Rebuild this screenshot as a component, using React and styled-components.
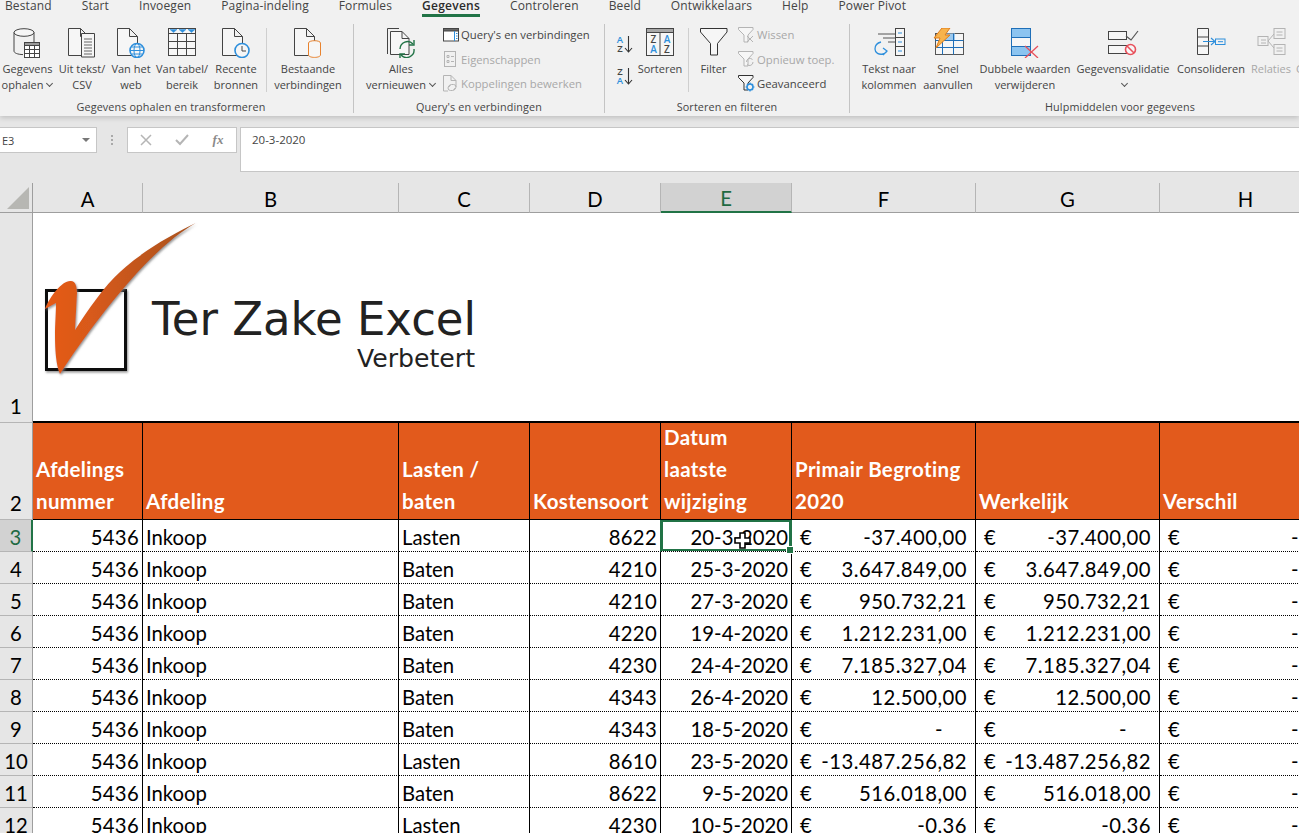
import React from 'react';
import styled, { createGlobalStyle } from 'styled-components';

const Global = createGlobalStyle`
  html, body { margin: 0; padding: 0; background: #e6e6e6; overflow: hidden; }
  #root { width: 1299px; height: 833px; overflow: hidden; }
`;
const Page = styled.div`
  width: 1299px; height: 833px; overflow: hidden; background: #e6e6e6;
  display: flex; flex-direction: column;
  font-family: "Open Sans", "Noto Sans", sans-serif;
`;
const Ribbon = styled.div`
  height: 116px; flex: none; background: #f1f1f1; overflow: hidden;
  box-shadow: 0 2px 5px rgba(0,0,0,.16); position: relative; z-index: 1;
`;
const TabBar = styled.div`
  height: 17px; display: flex; align-items: flex-start; gap: 30px; padding-left: 5px; overflow: hidden;
`;
const Tab = styled.div`
  height: 17px; margin-top: -3px; font-size: 12px; line-height: 17px; color: #444; white-space: nowrap;
  letter-spacing: .12px; position: relative; box-sizing: content-box;
  font-weight: ${p => (p.$active ? 600 : 400)};
  border-bottom: ${p => (p.$active ? '3px solid #217346' : '0')};
  ${p => p.$active && 'color:#2b2b2b; height:17px; letter-spacing: .25px;'}
`;
const Groups = styled.div`
  display: flex; height: 92px; padding-top: 7px;
`;
const Group = styled.section`
  width: ${p => p.$w}px; flex: none; height: 89px; display: flex; flex-direction: column;
  border-right: ${p => (p.$last ? '0' : '1px solid #c4c4c4')}; box-sizing: border-box;
`;
const GroupBody = styled.div`
  flex: 1; display: flex; padding-left: ${p => p.$pad || 0}px; min-height: 0;
`;
const Caption = styled.div`
  height: 16px; width: ${p => (p.$w ? `${p.$w}px` : 'auto')}; line-height: 20px; font-size: 10.8px; text-align: center; color: #444; white-space: nowrap;
  letter-spacing: .12px;
`;
const BigButton = styled.div`
  width: ${p => p.$w}px; flex: none; display: flex; flex-direction: column; align-items: center; padding-top: 4px;
  margin-left: ${p => p.$ml || 0}px;
`;
const IconSlot = styled.div`
  height: 33px; display: flex; justify-content: center; align-items: flex-start;
`;
const BigLabel = styled.div`
  font-size: 11px; line-height: 16px; text-align: center; color: ${p => (p.$off ? '#a8a8a8' : '#444')}; white-space: nowrap;
`;
const ClippedLabel = styled.div`
  flex: none; margin: 37px 0 0 3px; font-size: 11px; line-height: 16px; color: #a8a8a8; white-space: nowrap;
`;
const VSep = styled.div`
  width: 1px; height: 64px; margin: 4px ${p => p.$r || 0}px 0 ${p => p.$l || 0}px; background: #cfcfcf; flex: none;
`;
const SmallColumn = styled.div`
  width: ${p => p.$w}px; flex: none; display: flex; flex-direction: column; margin: -1.5px 0 0 ${p => p.$ml || 0}px;
`;
const SmallButton = styled.div`
  height: 24.5px; display: flex; align-items: center; gap: 2px; font-size: 11.3px; white-space: nowrap;
  color: ${p => (p.$off ? '#a8a8a8' : '#444')};
`;
const SmallIcon = styled.span`
  width: 17px; height: 20px; display: flex; align-items: center; justify-content: center; flex: none;
`;
const SortColumn = styled.div`
  width: 20px; flex: none; margin-left: ${p => p.$ml}px; display: flex; flex-direction: column; gap: 14px; padding-top: 11px;
`;
const Chevron = styled.span`
  display: inline-block; width: 4px; height: 4px; margin: 0 1px 3px 4px; border-right: 1px solid #555; border-bottom: 1px solid #555; transform: rotate(45deg);
`;
const FormulaBar = styled.div`
  height: 56px; flex: none; display: flex; align-items: flex-start; padding-top: 11px; box-sizing: content-box;
`;
const NameBox = styled.div`
  height: 24px; background: #fff; border: 1px solid #c6c6c6; border-left: 0; box-sizing: content-box;
  display: flex; align-items: center; justify-content: space-between; font-size: 11px; color: #444; padding-left: 2px;
  width: 94px;
`;
const DropTri = styled.span`
  width: 0; height: 0; border-left: 4px solid transparent; border-right: 4px solid transparent; border-top: 4px solid #777; margin-right: 6px;
`;
const Grip = styled.div`
  width: 30px; height: 26px; flex: none; display: flex; flex-direction: column; align-items: center; justify-content: center; gap: 2px;
  & > i { width: 2px; height: 2px; background: #a9a9a9; display: block; }
`;
const FxBox = styled.div`
  width: 108px; height: 24px; flex: none; background: #fff; border: 1px solid #c6c6c6; display: flex; align-items: center; color: #b0b0b0;
`;
const FxSlot = styled.span`
  width: 36px; display: flex; justify-content: center; align-items: center; font-family: "Liberation Serif", serif; font-style: italic; font-size: 13px; color: #8a8a8a; font-weight: 700;
`;
const FormulaInput = styled.div`
  flex: 1; height: 45px; margin-left: 3px; background: #fff; border: 1px solid #c6c6c6; border-right: 0; box-sizing: border-box;
  padding: 4px 0 0 11px; font-size: 11.5px; line-height: 16px; color: #444;
`;
const Sheet = styled.div`
  display: grid; position: relative; flex: none;
  grid-template-columns: 33px 110px 256px 131px 131px 131px 184px 184px 172px;
  grid-template-rows: 30px 210px 97px repeat(10, 32px);
  font-family: Lato, "Liberation Sans", sans-serif; font-size: 20.3px; color: #000; background: #fff;
`;
const Corner = styled.div`
  background: #e6e6e6; border-right: 1px solid #9e9e9e; border-bottom: 1px solid #9e9e9e; box-sizing: border-box; display: flex; align-items: flex-end; justify-content: flex-end; padding: 0 3px 3px 0;
`;
const Tri = styled.span`
  width: 0; height: 0; border-left: 22px solid transparent; border-bottom: 22px solid #b7b7b3;
`;
const ColHead = styled.div`
  background: ${p => (p.$on ? '#d2d2d2' : '#e6e6e6')}; box-sizing: border-box;
  border-right: 1px solid #b5b5b5;
  border-bottom: ${p => (p.$on ? '2px solid #217346' : '1px solid #9e9e9e')};
  color: ${p => (p.$on ? '#1f6a42' : '#000')};
  display: flex; align-items: flex-end; justify-content: center; line-height: 26px;
`;
const RowHead = styled.div`
  background: ${p => (p.$on ? '#d2d2d2' : '#e6e6e6')}; box-sizing: border-box;
  border-right: ${p => (p.$on ? '2px solid #217346' : '1px solid #9e9e9e')};
  border-bottom: 1px solid #b5b5b5;
  color: ${p => (p.$on ? '#1f6a42' : '#000')};
  display: flex; align-items: flex-end; justify-content: center; line-height: ${p => (p.$tall ? 32 : 28)}px;
`;
const LogoCell = styled.div`
  grid-column: 2 / -1; background: #fff; border-bottom: 2px solid #000; box-sizing: border-box; overflow: hidden; line-height: 0;
`;
const HeadCell = styled.div`
  background: #e25a1c; color: #fff; font-weight: 700; box-sizing: border-box; border-right: 1.5px solid #000; border-bottom: 1.5px solid #000;
  display: flex; align-items: flex-end; padding: 0 3px 2px 3px; line-height: 32px; white-space: pre-line;
  font-size: 20.5px; letter-spacing: .35px;
`;
const Cell = styled.div`
  box-sizing: border-box; background: #fff; border-right: 1.5px solid #000; border-bottom: 1px dotted #000;
  display: flex; align-items: center; white-space: nowrap; overflow: hidden; line-height: 26px;
  justify-content: ${p => (p.$right ? 'flex-end' : 'flex-start')};
  letter-spacing: ${p => (p.$right ? '.3px' : '0')};
  padding: 3px 3px 0 3px;
`;
const MoneyCell = styled(Cell)`
  justify-content: space-between; padding: 3px ${p => (p.$dash ? 32 : 8)}px 0 8px; letter-spacing: .45px;
`;
const DateCell = styled(Cell)`
  position: relative; overflow: visible; justify-content: flex-end;
  ${p => p.$on && 'box-shadow: inset 0 0 0 2px #217346, -1px 0 0 #217346; border-right-color: #217346; z-index: 2;'}
`;
const Handle = styled.span`
  position: absolute; right: -3px; bottom: -3px; width: 6px; height: 6px; background: #217346; border: 1px solid #fff; box-sizing: content-box;
`;
const Cursor = styled.svg`
  position: absolute; left: 73px; top: 12px; width: 17px; height: 17px;
`;

const D = '#444';
const B = '#2e8fdc';
const G = '#b4b4b4';
const Svg = ({ w, h, children }) => (
  <svg width={w} height={h} viewBox={`0 0 ${w} ${h}`} fill="none" stroke={D} strokeWidth="1" style={{ display: 'block', flex: 'none' }}>{children}</svg>
);
const DocPath = ({ x = 0.5, y = 0.5, c = D }) => (
  <path d={`M${x} ${y}H${x + 12}L${x + 20} ${y + 8}V${y + 27}H${x}Z M${x + 12} ${y}V${y + 8}H${x + 20}`} stroke={c} fill="#f6f6f6" />
);
const MiniTable = ({ x, y, w = 15, h = 15, c = D }) => (
  <g stroke={c}>
    <rect x={x + .5} y={y + .5} width={w} height={h} fill="#fff" />
    <rect x={x + .5} y={y + .5} width={w} height="3" fill="#9a9a9a" />
    <path d={`M${x + w / 3 + .5} ${y + 3}V${y + h}M${x + 2 * w / 3 + .5} ${y + 3}V${y + h}M${x} ${y + 7.5}H${x + w}M${x} ${y + 11.5}H${x + w}`} />
  </g>
);

const IcoData = () => (
  <Svg w={29} h={30}>
    <ellipse cx="11" cy="4.5" rx="10" ry="3.8" fill="#f6f6f6" />
    <path d="M1 4.5V23c0 2 3.5 3.4 9 3.6M21 4.5V14" />
    <MiniTable x={11} y={14} />
  </Svg>
);
const IcoText = () => (
  <Svg w={28} h={30}>
    <DocPath />
    <path d="M13.5 5.5H26.5V29H13.5Z" fill="#f6f6f6" />
    <path d="M16 11h8M16 14h8M16 17h8M16 20h8M16 23h8M16 26h8" stroke="#666" />
  </Svg>
);
const IcoWeb = () => (
  <Svg w={28} h={30}>
    <DocPath />
    <circle cx="20" cy="22.5" r="7" stroke={B} strokeWidth="1.6" fill="#f6f6f6" />
    <ellipse cx="20" cy="22.5" rx="3" ry="7" stroke={B} />
    <path d="M13 22.5h14M14.5 19h11M14.5 26h11" stroke={B} />
  </Svg>
);
const IcoRange = () => (
  <Svg w={29} h={29}>
    <rect x=".5" y=".5" width="27" height="27" fill="#f6f6f6" />
    <path d="M.5 5.5h27M.5 13.5h27M.5 20.5h27M9.5 5.5v22M18.5 5.5v22" />
    <path d="M2 1.5h7l-3.5 3zM11 1.5h7l-3.5 3zM20 1.5h7l-3.5 3z" fill={B} stroke={B} strokeWidth=".5" />
  </Svg>
);
const IcoRecent = () => (
  <Svg w={28} h={30}>
    <DocPath />
    <circle cx="20" cy="22.5" r="7" stroke={B} strokeWidth="1.6" fill="#f6f6f6" />
    <path d="M20 18v5h4" />
  </Svg>
);
const IcoExisting = () => (
  <Svg w={28} h={30}>
    <DocPath />
    <ellipse cx="20.5" cy="15" rx="6" ry="2.3" stroke="#e8832f" fill="#f6f6f6" />
    <path d="M14.5 15v12c0 1.3 2.5 2.4 6 2.4s6-1.1 6-2.4V15" stroke="#e8832f" fill="#f6f6f6" />
  </Svg>
);
const IcoRefresh = () => (
  <Svg w={29} h={30}>
    <path d="M.5 26V.5H12" />
    <path d="M3.5 3.5H15L22 10.5V26.5H3.5Z" fill="#f6f6f6" />
    <path d="M15 3.5V10.5H22" />
    <path d="M13 21a7.5 7.5 0 0 1 13-5M27 21a7.5 7.5 0 0 1-13 6" stroke="#217346" strokeWidth="1.4" />
    <path d="M27 12v5h-5M13 31v-5h5" stroke="#217346" strokeWidth="1.4" />
  </Svg>
);
const IcoQueries = () => (
  <Svg w={16} h={14}>
    <rect x=".5" y=".5" width="15" height="12.5" fill="#fff" />
    <rect x=".5" y=".5" width="15" height="2.5" fill="#666" />
    <path d="M11.5 3v10" stroke={B} />
    <path d="M13 5.5h1.5M13 8h1.5M13 10.5h1.5" stroke={B} />
  </Svg>
);
const IcoProps = () => (
  <Svg w={14} h={16}>
    <rect x=".5" y=".5" width="11" height="15" stroke={G} />
    <path d="M3 4.5h2v2H3zM3 9.5h2v2H3zM7 5.5h3M7 10.5h3" stroke={G} />
  </Svg>
);
const IcoLinks = () => (
  <Svg w={15} h={17}>
    <path d="M.5.5H8L13 5.5V12M.5.5V16H5M8 .5V5.5H13" stroke={G} />
    <path d="M6 12a2.5 2.5 0 0 1 2.5-2.5h2a2.5 2.5 0 0 1 0 5M12 13a2.5 2.5 0 0 1-2.5 2.5h-2a2.5 2.5 0 0 1 0-5" stroke={G} />
  </Svg>
);
const Letter = ({ x, y, c, s = 9.5, children }) => (
  <text x={x} y={y} fill={c} stroke="none" fontSize={s} fontWeight="600" fontFamily="Open Sans, sans-serif" textAnchor="middle">{children}</text>
);
const IcoSort = ({ top, bottom, tc, bc }) => (
  <Svg w={18} h={18}>
    <Letter x={5} y={8} c={tc}>{top}</Letter>
    <Letter x={5} y={17} c={bc}>{bottom}</Letter>
    <path d="M13.5 1v16M10 13l3.5 4 3.5-4" stroke="#333" strokeWidth="1.1" />
  </Svg>
);
const IcoSortBig = () => (
  <Svg w={29} h={28}>
    <rect x=".5" y=".5" width="27" height="27" fill="#f6f6f6" />
    <rect x=".5" y=".5" width="27" height="4" fill="#a8a8a8" />
    <path d="M14 4.5v23" />
    <Letter x={7.5} y={14.5} c={D} s={10}>Z</Letter>
    <Letter x={7.5} y={25} c={B} s={10}>A</Letter>
    <Letter x={21} y={14.5} c={B} s={10}>A</Letter>
    <Letter x={21} y={25} c={D} s={10}>Z</Letter>
  </Svg>
);
const IcoFunnel = () => (
  <Svg w={28} h={28}>
    <path d="M.5.5H27V4L17.5 15.5V27H10.5V15.5L.5 4Z" fill="#f6f6f6" stroke="#333" />
  </Svg>
);
const SmallFunnel = ({ c = D }) => (
  <path d="M.5.5H15V2.5L10 8V15H6V8L.5 2.5Z" stroke={c} fill="#f6f6f6" />
);
const IcoClear = () => (
  <Svg w={17} h={16}>
    <SmallFunnel c={G} />
    <path d="M9 9l6 6M15 9l-6 6" stroke={G} />
  </Svg>
);
const IcoReapply = () => (
  <Svg w={17} h={16}>
    <SmallFunnel c={G} />
    <path d="M8.5 11a3.5 3.5 0 0 1 6-2.5M15 11a3.5 3.5 0 0 1-6 2.5" stroke={G} />
  </Svg>
);
const IcoAdvanced = () => (
  <Svg w={17} h={17}>
    <SmallFunnel c="#333" />
    <circle cx="12" cy="12" r="3" stroke={B} strokeWidth="1.5" fill="#f1f1f1" />
    <path d="M12 7.5v2M12 14.5v2M7.5 12h2M14.5 12h2M9 9l1.3 1.3M13.7 13.7L15 15M9 15l1.3-1.3M13.7 10.3L15 9" stroke={B} strokeWidth="1.2" />
  </Svg>
);
const IcoColumns = () => (
  <Svg w={31} h={31}>
    <path d="M4 6h17M9 10h12M14 14h7" stroke="#555" />
    <path d="M7 14c-4 1-6 4-6 7 0 4 4 6 8 5 3-.7 4-3 4-3M9 20l4 3-4 4" stroke={B} strokeWidth="1.3" />
    <rect x="21.5" y=".5" width="9" height="27" fill="#f6f6f6" />
    <path d="M21.5 9.5h9M21.5 18.5h9" />
    <path d="M24 5h4M24 14h4M24 23h4" stroke={B} />
  </Svg>
);
const IcoFlash = () => (
  <Svg w={31} h={30}>
    <rect x="2.5" y="5.5" width="28" height="21" fill="#f6f6f6" stroke="#555" />
    <rect x="10" y="5.5" width="12" height="7" fill="#9cc9ee" stroke="none" />
    <path d="M2.5 12.5h28M2.5 19.5h28" stroke="#1f6fb8" />
    <path d="M9.5 5.5v21M20.5 5.5v21" stroke="#1f6fb8" />
    <path d="M9 0h8l-5 7h5L3 20l4-10H1Z" fill="#f7b34c" stroke="#e07c1a" />
  </Svg>
);
const IcoDup = () => (
  <Svg w={28} h={30}>
    <rect x=".5" y=".5" width="19" height="27" fill="#f6f6f6" stroke="#1f6fb8" />
    <rect x=".5" y=".5" width="19" height="9" fill="#8cc4f0" stroke="#1f6fb8" />
    <rect x=".5" y="18.5" width="19" height="9" fill="#8cc4f0" stroke="#1f6fb8" />
    <path d="M14 18l13 12M27 18L14 30" stroke="#e8505b" strokeWidth="1.3" />
  </Svg>
);
const IcoValid = () => (
  <Svg w={31} h={28}>
    <rect x=".5" y="3.5" width="18" height="8" fill="#f6f6f6" />
    <rect x=".5" y="17.5" width="18" height="8" fill="#f6f6f6" />
    <path d="M18 8l5 4 7-9" stroke="#555" strokeWidth="1.2" />
    <circle cx="22.5" cy="21.5" r="5" stroke="#e8505b" strokeWidth="1.6" fill="#f6f6f6" />
    <path d="M19 18l7 7" stroke="#e8505b" strokeWidth="1.6" />
  </Svg>
);
const IcoConsol = () => (
  <Svg w={29} h={28}>
    <path d="M.5.5h11v26h-11zM.5 9h11M.5 18h11" fill="#f6f6f6" />
    <path d="M6 13.5h12M14 10l4 3.5-4 3.5" stroke={B} strokeWidth="1.1" />
    <rect x="18.5" y="11" width="9.5" height="5.5" stroke={B} />
    <path d="M21 13.7h5" stroke={B} />
  </Svg>
);
const IcoRel = () => (
  <Svg w={29} h={28}>
    <rect x="1" y="8.5" width="10" height="9" stroke={G} />
    <rect x="17" y=".5" width="11" height="10" stroke={G} />
    <rect x="17" y="16.5" width="11" height="10" stroke={G} />
    <path d="M11 13l6-7M11 13l6 7M19.5 4h6M19.5 7h6M4 12h5M4 15h5M19.5 20h6M19.5 23h6" stroke={G} />
  </Svg>
);

const cols = ['A', 'B', 'C', 'D', 'E', 'F', 'G', 'H'];
const rows = [
  [3, 'Lasten', '8622', '20-3-2020', '-37.400,00', '-37.400,00'],
  [4, 'Baten', '4210', '25-3-2020', '3.647.849,00', '3.647.849,00'],
  [5, 'Baten', '4210', '27-3-2020', '950.732,21', '950.732,21'],
  [6, 'Baten', '4220', '19-4-2020', '1.212.231,00', '1.212.231,00'],
  [7, 'Baten', '4230', '24-4-2020', '7.185.327,04', '7.185.327,04'],
  [8, 'Baten', '4343', '26-4-2020', '12.500,00', '12.500,00'],
  [9, 'Baten', '4343', '18-5-2020', '-', '-'],
  [10, 'Lasten', '8610', '23-5-2020', '-13.487.256,82', '-13.487.256,82'],
  [11, 'Baten', '8622', '9-5-2020', '516.018,00', '516.018,00'],
  [12, 'Lasten', '4230', '10-5-2020', '-0,36', '-0,36'],
];
const heads = ['Afdelings\nnummer', 'Afdeling', 'Lasten /\nbaten', 'Kostensoort', 'Datum\nlaatste\nwijziging', 'Primair Begroting\n2020', 'Werkelijk', 'Verschil'];
const tabs = ['Bestand', 'Start', 'Invoegen', 'Pagina-indeling', 'Formules', 'Gegevens', 'Controleren', 'Beeld', 'Ontwikkelaars', 'Help', 'Power Pivot'];

const Money = ({ value }) => (
  <MoneyCell $dash={value === '-'}><span>€</span><span>{value}</span></MoneyCell>
);

const Logo = () => (
  <svg width="460" height="207" viewBox="33 213 460 207" style={{ display: 'block' }}>
    <defs>
      <linearGradient id="orange" x1="45" x2="196" y1="300" y2="300" gradientUnits="userSpaceOnUse">
        <stop offset="0" stopColor="#e65a16" />
        <stop offset=".3" stopColor="#d85a1a" />
        <stop offset="1" stopColor="#a8521c" />
      </linearGradient>
      <filter id="soft" x="-10%" y="-10%" width="125%" height="125%">
        <feDropShadow dx="1" dy="1.5" stdDeviation="1.2" floodColor="#777" floodOpacity=".8" />
      </filter>
    </defs>
    <rect x="46.5" y="290.5" width="79" height="79" fill="#fff" stroke="#111" strokeWidth="3" filter="url(#soft)" />
    <path d="M60 374C56 365 55 350 55 335C55 325 56 312 56 303L45 309C50 296 62 281 70 281C75 280 77 286 77 293L75 330C88 310 105 285 120 272C135 258 160 240 195.7 223C180 232 160 248 137 273C115 297 85 335 60 374Z" fill="url(#orange)" filter="url(#soft)" />
    <text x="152" y="335" fontFamily="DejaVu Sans, sans-serif" fontSize="46" fill="#222" textLength="324" lengthAdjust="spacingAndGlyphs">Ter Zake Excel</text>
    <text x="357" y="367" fontFamily="DejaVu Sans, sans-serif" fontSize="24" fill="#222" textLength="118" lengthAdjust="spacingAndGlyphs">Verbetert</text>
  </svg>
);

export default function App() {
  return (
    <Page>
      <Global />
      <Ribbon>
        <TabBar>
          {tabs.map(t => <Tab key={t} $active={t === 'Gegevens'}>{t}</Tab>)}
        </TabBar>
        <Groups>
          <Group $w={354}>
            <GroupBody>
              <BigButton $w={55}><IconSlot><IcoData /></IconSlot><BigLabel>Gegevens</BigLabel><BigLabel>ophalen<Chevron /></BigLabel></BigButton>
              <BigButton $w={54}><IconSlot><IcoText /></IconSlot><BigLabel>Uit tekst/</BigLabel><BigLabel>CSV</BigLabel></BigButton>
              <BigButton $w={44}><IconSlot><IcoWeb /></IconSlot><BigLabel>Van het</BigLabel><BigLabel>web</BigLabel></BigButton>
              <BigButton $w={58}><IconSlot><IcoRange /></IconSlot><BigLabel>Van tabel/</BigLabel><BigLabel>bereik</BigLabel></BigButton>
              <BigButton $w={50}><IconSlot><IcoRecent /></IconSlot><BigLabel>Recente</BigLabel><BigLabel>bronnen</BigLabel></BigButton>
              <VSep $l={5} $r={4} />
              <BigButton $w={74}><IconSlot><IcoExisting /></IconSlot><BigLabel>Bestaande</BigLabel><BigLabel>verbindingen</BigLabel></BigButton>
            </GroupBody>
            <Caption $w={342}>Gegevens ophalen en transformeren</Caption>
          </Group>
          <Group $w={251}>
            <GroupBody>
              <BigButton $w={74} $ml={10}><IconSlot><IcoRefresh /></IconSlot><BigLabel>Alles</BigLabel><BigLabel>vernieuwen<Chevron /></BigLabel></BigButton>
              <SmallColumn $w={160} $ml={4}>
                <SmallButton><SmallIcon><IcoQueries /></SmallIcon>Query's en verbindingen</SmallButton>
                <SmallButton $off><SmallIcon><IcoProps /></SmallIcon>Eigenschappen</SmallButton>
                <SmallButton $off><SmallIcon><IcoLinks /></SmallIcon>Koppelingen bewerken</SmallButton>
              </SmallColumn>
            </GroupBody>
            <Caption>Query's en verbindingen</Caption>
          </Group>
          <Group $w={245}>
            <GroupBody>
              <SortColumn $ml={10}>
                <IcoSort top="A" bottom="Z" tc={B} bc={D} />
                <IcoSort top="Z" bottom="A" tc={D} bc={B} />
              </SortColumn>
              <BigButton $w={50}><IconSlot><IcoSortBig /></IconSlot><BigLabel>Sorteren</BigLabel></BigButton>
              <VSep $l={3} />
              <BigButton $w={49}><IconSlot><IcoFunnel /></IconSlot><BigLabel>Filter</BigLabel></BigButton>
              <SmallColumn $w={100}>
                <SmallButton $off><SmallIcon><IcoClear /></SmallIcon>Wissen</SmallButton>
                <SmallButton $off><SmallIcon><IcoReapply /></SmallIcon>Opnieuw toep.</SmallButton>
                <SmallButton><SmallIcon><IcoAdvanced /></SmallIcon>Geavanceerd</SmallButton>
              </SmallColumn>
            </GroupBody>
            <Caption>Sorteren en filteren</Caption>
          </Group>
          <Group $w={546} $last>
            <GroupBody $pad={9}>
              <BigButton $w={60}><IconSlot><IcoColumns /></IconSlot><BigLabel>Tekst naar</BigLabel><BigLabel>kolommen</BigLabel></BigButton>
              <BigButton $w={58}><IconSlot><IcoFlash /></IconSlot><BigLabel>Snel</BigLabel><BigLabel>aanvullen</BigLabel></BigButton>
              <BigButton $w={96}><IconSlot><IcoDup /></IconSlot><BigLabel>Dubbele waarden</BigLabel><BigLabel>verwijderen</BigLabel></BigButton>
              <BigButton $w={100}><IconSlot><IcoValid /></IconSlot><BigLabel>Gegevensvalidatie</BigLabel><BigLabel><Chevron /></BigLabel></BigButton>
              <BigButton $w={76}><IconSlot><IcoConsol /></IconSlot><BigLabel>Consolideren</BigLabel></BigButton>
              <BigButton $w={44}><IconSlot><IcoRel /></IconSlot><BigLabel $off>Relaties</BigLabel></BigButton>
              <ClippedLabel>Gegevensmodel</ClippedLabel>
            </GroupBody>
            <Caption $w={540}>Hulpmiddelen voor gegevens</Caption>
          </Group>
        </Groups>
      </Ribbon>
      <FormulaBar>
        <NameBox>E3<DropTri /></NameBox>
        <Grip><i /><i /><i /></Grip>
        <FxBox>
          <FxSlot>
            <svg width="12" height="12" viewBox="0 0 12 12" stroke="#b5b5b5" strokeWidth="1.5"><path d="M1 1l10 10M11 1L1 11" /></svg>
          </FxSlot>
          <FxSlot>
            <svg width="14" height="12" viewBox="0 0 14 12" fill="none" stroke="#b5b5b5" strokeWidth="2"><path d="M1 6l4 4 8-9" /></svg>
          </FxSlot>
          <FxSlot>fx</FxSlot>
        </FxBox>
        <FormulaInput>20-3-2020</FormulaInput>
      </FormulaBar>
      <Sheet>
        <Corner><Tri /></Corner>
        {cols.map(c => <ColHead key={c} $on={c === 'E'}>{c}</ColHead>)}
        <RowHead $tall>1</RowHead>
        <LogoCell><Logo /></LogoCell>
        <RowHead $tall>2</RowHead>
        {heads.map(h => <HeadCell key={h}>{h}</HeadCell>)}
        {rows.map(([n, type, code, date, amount, actual]) => (
          <React.Fragment key={n}>
            <RowHead $on={n === 3}>{n}</RowHead>
            <Cell $right>5436</Cell>
            <Cell>Inkoop</Cell>
            <Cell>{type}</Cell>
            <Cell $right>{code}</Cell>
            <DateCell $on={n === 3}>
              {date}
              {n === 3 && <Handle />}
              {n === 3 && (
                <Cursor viewBox="0 0 17 17">
                  <path d="M6 1h5v5h5v5h-5v5H6v-5H1V6h5Z" fill="#fff" stroke="#000" strokeWidth="1.6" />
                </Cursor>
              )}
            </DateCell>
            <Money value={amount} />
            <Money value={actual} />
            <Money value="-" />
          </React.Fragment>
        ))}
      </Sheet>
    </Page>
  );
}
